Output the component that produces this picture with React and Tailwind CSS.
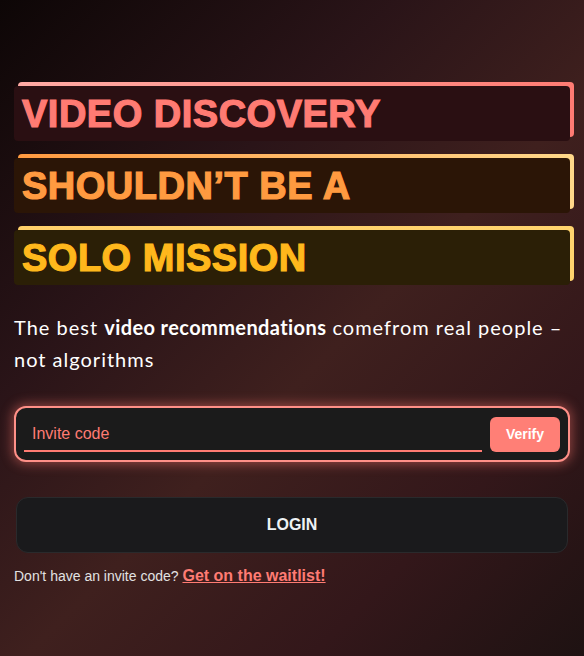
export default function App() {
  const lines = [
    {
      text: "VIDEO DISCOVERY",
      box: "bg-[#2a0f12]",
      color: "text-[#ff7b73] [-webkit-text-stroke:1.2px_#ff7b73]",
      stripe: "bg-gradient-to-r from-[#ffaaa4] to-[#ff7b73]",
    },
    {
      text: "SHOULDN\u2019T BE A",
      box: "bg-[#2b1506]",
      color: "text-[#ff9a40] [-webkit-text-stroke:1.2px_#ff9a40]",
      stripe: "bg-gradient-to-r from-[#ff9a40] to-[#ffd88a]",
    },
    {
      text: "SOLO MISSION",
      box: "bg-[#2b1f06]",
      color: "text-[#ffb81c] [-webkit-text-stroke:1.2px_#ffb81c]",
      stripe: "bg-gradient-to-r from-[#ffd06a] to-[#ffd46e]",
    },
  ];

  return (
    <div className="min-h-screen w-full bg-[linear-gradient(135deg,#0d0606_0%,#2a1418_32%,#3f201e_55%,#33171a_78%,#1e1212_100%)] font-['Liberation_Sans',Arial,sans-serif]">
      <div className="px-[14px] pt-[86px] pb-10">
        {/* Headline */}
        <div className="flex flex-col gap-[17px]">
          {lines.map((l) => (
            <div key={l.text} className="relative h-[55px]">
              <div className={`absolute inset-0 translate-x-[4px] -translate-y-[4px] rounded-[4px] ${l.stripe}`} />
              <div className={`relative flex h-full items-center rounded-[4px] px-[8px] ${l.box}`}>
                <span className={`text-[38px] font-bold leading-none tracking-[0.5px] ${l.color}`}>
                  {l.text}
                </span>
              </div>
            </div>
          ))}
        </div>

        {/* Tagline */}
        <p className="mt-[26px] font-['Lato',sans-serif] text-[20px] leading-[32px] font-normal tracking-[1px] text-white">
          The best <b className="font-bold tracking-[0.4px]">video recommendations</b> comefrom real people – not algorithms
        </p>

        {/* Invite code */}
        <div className="mt-[31px] flex h-[56px] items-center gap-2 rounded-[12px] border-2 border-[#ff9088] bg-[#1b1b1b] pl-[8px] pr-[8px] shadow-[0_0_12px_2px_rgba(255,120,110,0.45)]">
          <input
            placeholder="Invite code"
            className="h-[34px] flex-1 self-end mb-[8px] border-b-2 border-[#ff7b73] bg-transparent px-[8px] text-[16px] text-[#ff7b73] outline-none placeholder:text-[#ff7b73]"
          />
          <button className="h-[35px] w-[70px] rounded-[6px] bg-[#ff7f76] text-[14px] font-bold text-white">
            Verify
          </button>
        </div>

        {/* Login */}
        <button className="mt-[35px] mx-[2px] flex h-[56px] w-[calc(100%-4px)] items-center justify-center rounded-[12px] border border-[#2a2a2c] bg-[#1a1a1c] text-[16px] font-bold text-[#eef2f4]">
          LOGIN
        </button>

        <p className="mt-[11px] text-[14px] text-[#e2e2e2]">
          Don't have an invite code?{" "}
          <a href="#" className="text-[16px] font-bold text-[#ff7b73] underline">
            Get on the waitlist!
          </a>
        </p>
      </div>
    </div>
  );
}
